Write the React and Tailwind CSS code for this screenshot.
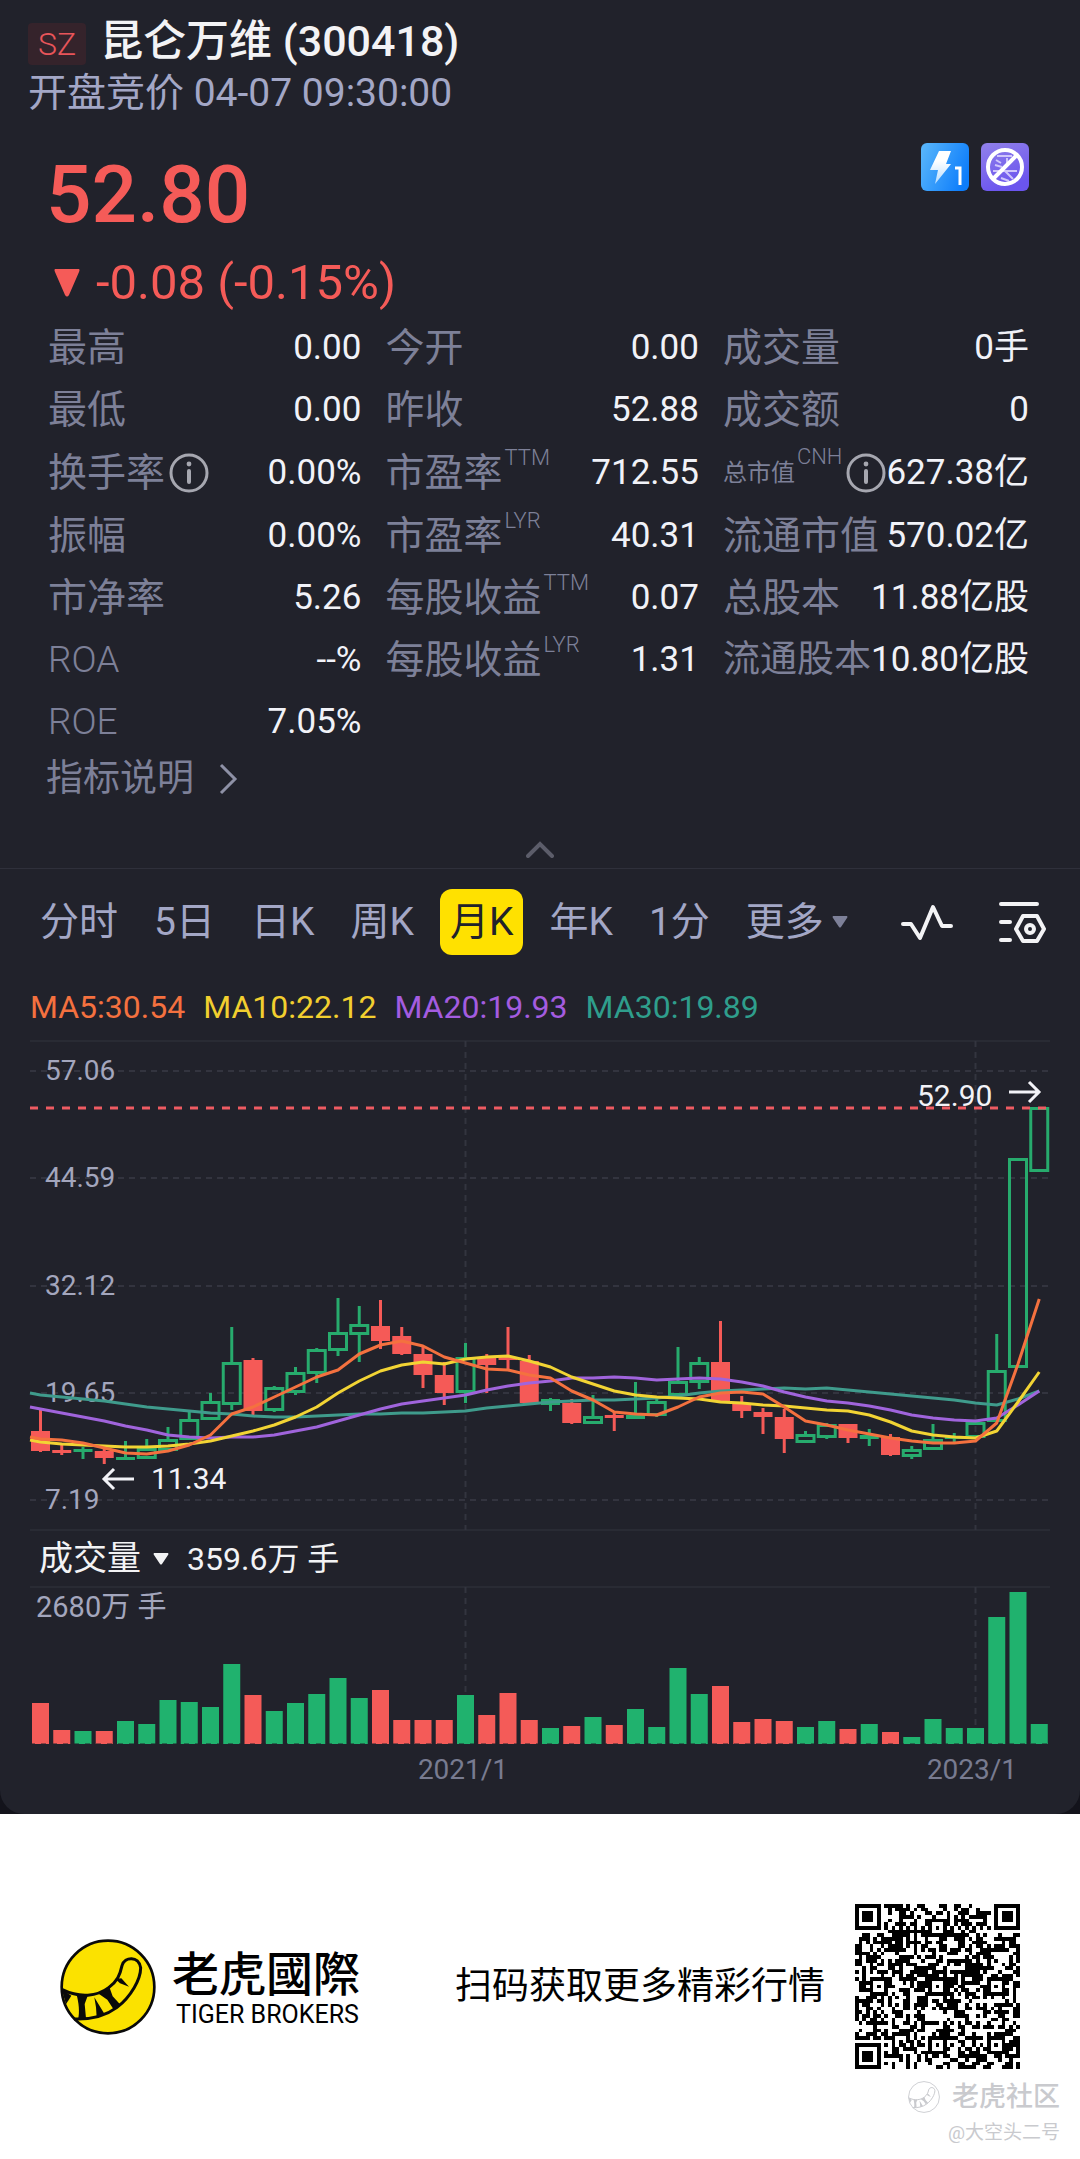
const STEP = 21.25;
const START = 40.5;

const cx = (i) => START + i * STEP;

const stats = [
  { label: "最高", value: "0.00" },
  { label: "今开", value: "0.00" },
  { label: "成交量", value: "0手" },
  { label: "最低", value: "0.00" },
  { label: "昨收", value: "52.88" },
  { label: "成交额", value: "0" },
  { label: "换手率", value: "0.00%", info: true },
  { label: "市盈率", sup: "TTM", value: "712.55" },
  { label: "总市值", sup: "CNH", value: "627.38亿", info: true, size: "text-[24px]" },
  { label: "振幅", value: "0.00%" },
  { label: "市盈率", sup: "LYR", value: "40.31" },
  { label: "流通市值", value: "570.02亿" },
  { label: "市净率", value: "5.26" },
  { label: "每股收益", sup: "TTM", value: "0.07" },
  { label: "总股本", value: "11.88亿股" },
  { label: "ROA", value: "--%", size: "text-[37px] font-light" },
  { label: "每股收益", sup: "LYR", value: "1.31" },
  { label: "流通股本", value: "10.80亿股", size: "text-[37px]" },
  { label: "ROE", value: "7.05%", size: "text-[37px] font-light" },
];

const tabs = ["分时", "5日", "日K", "周K", "月K", "年K", "1分"];

const averages = [
  {
    text: "MA5:30.54",
    className: "text-[#f4713f]",
    stroke: "#f4713f",
    points: [399, 400, 403, 408, 413, 414, 411, 405, 395, 374, 367, 357, 347, 337, 330, 314, 305, 301, 306, 317, 323, 329, 330, 335, 338, 351, 360, 372, 374, 375, 367, 357, 353, 352, 354, 367, 381, 385, 390, 394, 398, 401, 403, 403, 401, 383, 324, 259],
  },
  {
    text: "MA10:22.12",
    className: "text-[#f2cf2f]",
    stroke: "#f2d434",
    points: [402, 404, 405, 406, 407, 407, 406, 404, 401, 396, 391, 385, 377, 367, 353, 341, 331, 325, 322, 324, 319, 317, 316, 321, 327, 337, 344, 351, 355, 357, 358, 359, 362, 363, 365, 366, 368, 370, 371, 375, 382, 391, 395, 397, 398, 391, 362, 332],
  },
  {
    text: "MA20:19.93",
    className: "text-[#a45ce0]",
    stroke: "#a064dc",
    points: [369, 373, 377, 381, 386, 390, 395, 397, 398, 397, 397, 395, 391, 387, 381, 375, 369, 364, 361, 358, 355, 350, 346, 343, 341, 338, 338, 337, 338, 340, 339, 338, 339, 342, 346, 352, 357, 361, 363, 366, 370, 375, 378, 380, 381, 378, 365, 351],
  },
  {
    text: "MA30:19.89",
    className: "text-[#2f9e8c]",
    stroke: "#3f9b8c",
    points: [355, 357, 359, 361, 364, 367, 369, 371, 373, 374, 376, 377, 377, 376, 375, 374, 374, 373, 373, 372, 371, 368, 366, 364, 362, 361, 360, 360, 359, 358, 356, 353, 351, 350, 349, 348, 349, 348, 350, 352, 354, 356, 358, 360, 363, 365, 359, 351],
  },
];

// [up, high, body top, body bottom, low, volume]
const candles = [
  [0, 369, 391, 411, 412, 41],
  [0, 405, 410, 413, 415, 14],
  [1, 407, 409, 412, 419, 13],
  [0, 408, 411, 418, 424, 13],
  [1, 401, 417, 420, 420, 23],
  [1, 399, 408, 419, 419, 20],
  [1, 387, 399, 411, 411, 44],
  [1, 372, 379, 400, 400, 42],
  [1, 353, 361, 380, 380, 37],
  [1, 287, 322, 365, 370, 80],
  [0, 318, 320, 371, 375, 49],
  [1, 346, 347, 371, 372, 33],
  [1, 327, 332, 353, 355, 41],
  [1, 308, 309, 334, 343, 50],
  [1, 258, 292, 311, 316, 66],
  [1, 266, 284, 295, 322, 46],
  [0, 260, 286, 301, 309, 54],
  [0, 287, 296, 314, 315, 24],
  [0, 307, 314, 335, 348, 24],
  [0, 322, 335, 353, 365, 24],
  [1, 303, 317, 353, 363, 49],
  [0, 314, 318, 325, 353, 29],
  [0, 287, 317, 320, 330, 51],
  [0, 315, 321, 363, 363, 24],
  [1, 358, 359, 365, 371, 16],
  [0, 359, 363, 383, 384, 18],
  [1, 355, 376, 384, 384, 27],
  [0, 372, 375, 378, 391, 19],
  [1, 342, 375, 379, 379, 35],
  [1, 359, 361, 376, 377, 17],
  [1, 307, 341, 356, 357, 76],
  [1, 317, 322, 343, 349, 50],
  [0, 281, 322, 361, 363, 58],
  [0, 356, 363, 371, 378, 22],
  [0, 368, 372, 377, 394, 25],
  [0, 369, 377, 399, 413, 23],
  [1, 391, 394, 403, 403, 17],
  [1, 383, 384, 398, 399, 23],
  [0, 384, 384, 398, 403, 15],
  [1, 389, 395, 399, 406, 20],
  [0, 394, 397, 415, 416, 12],
  [1, 406, 409, 417, 419, 7],
  [1, 384, 399, 410, 410, 25],
  [1, 393, 397, 399, 403, 16],
  [1, 382, 382, 398, 399, 16],
  [1, 294, 330, 382, 382, 127],
  [1, 118, 118, 328, 328, 152],
  [1, 67, 67, 132, 132, 20],
];

const priceAxis = [
  ["57.06", 31],
  ["44.59", 138],
  ["32.12", 246],
  ["19.65", 353],
  ["7.19", 460],
];

const QR_SIZE = 45;

const inFinder = (x, y) => (x < 8 && y < 8) || (x > QR_SIZE - 9 && y < 8) || (x < 8 && y > QR_SIZE - 9);

const qrPath = (() => {
  let seed = 300418;
  let d = "";
  for (let y = 0; y < QR_SIZE; y++) {
    for (let x = 0; x < QR_SIZE; x++) {
      seed = (seed * 1103515245 + 12345) % 2147483648;
      let dark = seed / 2147483648 > 0.48;
      if (x === 6 || y === 6) dark = (x + y) % 2 === 0;
      if (dark && !inFinder(x, y)) d += `M${x} ${y}h1v1h-1z`;
    }
  }
  return d;
})();

const InfoIcon = () => (
  <svg viewBox="0 0 40 40" className="w-10 h-10 shrink-0" fill="none" stroke="#a6a7b0" aria-hidden="true">
    <circle cx="20" cy="20" r="18" strokeWidth="3" />
    <path d="M20 18v11" strokeWidth="4" strokeLinecap="round" />
    <circle cx="20" cy="11" r="2.4" fill="#a6a7b0" stroke="none" />
  </svg>
);

const LevelBadge = () => (
  <svg viewBox="0 0 48 48" className="w-12 h-12" aria-label="Level 1">
    <defs>
      <linearGradient id="blue" x1="0" y1="0.2" x2="1" y2="0.6">
        <stop offset="0" stopColor="#56b4fb" />
        <stop offset="1" stopColor="#0d7dfb" />
      </linearGradient>
      <linearGradient id="bolt" x1="0" y1="0" x2="0" y2="1">
        <stop offset="0.3" stopColor="#fff" />
        <stop offset="1" stopColor="#b5dcff" />
      </linearGradient>
    </defs>
    <rect width="48" height="48" rx="6" fill="url(#blue)" />
    <path d="M18 8h12l-5 13h5L14 41l3-14H9z" fill="url(#bolt)" />
    <path d="M34 25h5v17" fill="none" stroke="#fff" strokeWidth="3" />
  </svg>
);

const NoShortBadge = () => (
  <svg viewBox="0 0 48 48" className="w-12 h-12" aria-label="No short selling">
    <defs>
      <linearGradient id="violet" x1="0" y1="0" x2="0.4" y2="1">
        <stop offset="0" stopColor="#9181ea" />
        <stop offset="1" stopColor="#6b55ee" />
      </linearGradient>
    </defs>
    <rect width="48" height="48" rx="6" fill="url(#violet)" />
    <g fill="none" stroke="#cfc6fb" strokeWidth="2">
      <path d="M16 13h15M15 17l5 3M14 22l7 2M26 15v6M12 28h24M24 28l8 8M20 35l8 3" />
    </g>
    <g fill="none" stroke="#fff" strokeWidth="4">
      <circle cx="24" cy="24" r="17" />
      <path d="M12 36l24-24" />
    </g>
  </svg>
);

const TigerLogo = ({ className, fill, stroke }) => (
  <svg viewBox="0 0 288 288" className={className} aria-hidden="true">
    <circle cx="144" cy="144" r="139" fill={fill} stroke={stroke} strokeWidth="8" />
    <path
      d="M7 152C60 178 112 172 146 146C172 126 180 108 186 80C194 52 236 50 242 86C242 120 214 172 170 206C132 234 90 242 42 240"
      fill="none"
      stroke={stroke}
      strokeWidth="9"
    />
    <g fill={stroke}>
      <path d="M5 150L34 170L18 196Z" />
      <path d="M50 168H84L74 195L78 238L54 242C60 220 56 190 50 168Z" />
      <path d="M103 175L112 190L134 226L110 235L108 205Z" />
      <path d="M116 164L148 144L158 172L180 196L160 210L142 182Z" />
      <path d="M166 120L184 118L207 143L180 133Z" />
    </g>
  </svg>
);

const Candle = ({ index, data }) => {
  const [up, high, top, bottom, low] = data;
  const x = cx(index);
  const color = up ? "#27ab6d" : "#f55a57";
  const hollow = up && bottom - top > 6;

  return (
    <g stroke={color} strokeWidth="3" fill="none">
      {high < top && <path d={`M${x} ${high}V${top + 1}`} />}
      {low > bottom && <path d={`M${x} ${bottom - 1}V${low}`} />}
      {hollow ? (
        <rect x={x - 8.5} y={top + 1.5} width="17" height={bottom - top - 3} />
      ) : (
        <rect x={x - 9.5} y={top} width="19" height={bottom - top} fill={color} stroke="none" />
      )}
    </g>
  );
};

const PriceChart = () => (
  <svg viewBox="0 0 1080 491" className="block w-full h-auto" fontFamily="Roboto, sans-serif">
    <g stroke="#33343f" strokeWidth="2" fill="none">
      <path d="M30 1H1050M30 490H1050" strokeWidth="1" />
      <g strokeDasharray="6 5">
        {priceAxis.map(([label, y]) => (
          <path key={label} d={`M30 ${y}H1050`} />
        ))}
        <path d={`M${cx(20)} 1V490M${cx(44)} 1V490`} />
      </g>
    </g>
    <g fill="#a3a6bd" fontSize="28">
      {priceAxis.map(([label, y]) => (
        <text key={label} x="45" y={y + 9}>{label}</text>
      ))}
    </g>

    {candles.map((data, i) => (
      <Candle key={i} index={i} data={data} />
    ))}

    <path d="M30 68H1050" stroke="#ee5b62" strokeWidth="3" strokeDasharray="8 8" />

    <g fill="none" strokeWidth="3" strokeLinejoin="round">
      {averages.slice().reverse().map((line) => (
        <polyline
          key={line.text}
          stroke={line.stroke}
          points={`30,${line.points[0] - 2} ` + line.points.map((y, i) => `${cx(i)},${y}`).join(" ")}
        />
      ))}
    </g>

    {/* high and low marks */}
    <g fill="#f2f2f7" fontSize="30">
      <text x="917" y="66">52.90</text>
      <text x="151" y="449">11.34</text>
    </g>
    <g fill="none" stroke="#f2f2f7" strokeWidth="3">
      <path d="M1009 52H1039M1029 42L1039 52L1029 62" />
      <path d="M134 439H104M114 429L104 439L114 449" />
    </g>
  </svg>
);

const VolumeChart = () => (
  <svg viewBox="0 0 1080 228" className="block w-full h-auto" fontFamily="Roboto, 'Noto Sans CJK SC', sans-serif">
    <g stroke="#33343f" fill="none">
      <path d="M30 1H1050" />
      <path d={`M${cx(20)} 1V158M${cx(44)} 1V158`} strokeWidth="2" strokeDasharray="6 5" />
    </g>
    <text x="36" y="31" fill="#a3a6bd" fontSize="29">2680万 手</text>
    {candles.map(([up, , , , , volume], i) => (
      <rect key={i} x={cx(i) - 8.5} y={158 - volume} width="17" height={volume} fill={up ? "#20b26e" : "#f45b58"} />
    ))}
    <path d="M30 158H1050" stroke="#21222b" strokeDasharray="5 6" />
    <g fill="#787b90" fontSize="28" textAnchor="middle">
      <text x="463" y="193">2021/1</text>
      <text x="972" y="193">2023/1</text>
    </g>
  </svg>
);

const Stat = ({ label, sup, value, info, size = "text-[39px]" }) => (
  <div className={`flex items-center justify-between whitespace-nowrap ${info ? "h-16" : "h-[62px]"}`}>
    <dt className={`flex items-center h-full text-[#7d8098] ${size}`}>
      {label}
      {sup && <sup className="self-start top-0 ml-0.5 text-[22px] leading-8 font-light">{sup}</sup>}
      {info && <span className="ml-1"><InfoIcon /></span>}
    </dt>
    <dd className="text-[35px] text-[#f1f2f8]">{value}</dd>
  </div>
);

const App = () => {
  return (
    <div className="bg-white font-[Roboto,'Noto_Sans_CJK_SC',sans-serif]">
      <div className="bg-[#13131b]">
        <main className="bg-[#21222b] rounded-b-[24px] overflow-hidden">
          {/* Symbol */}
          <header className="px-7 pt-[17px]">
            <div className="flex items-center gap-3.5">
              <span className="px-2.5 mt-1.5 h-[42px] leading-[42px] rounded bg-[#35232b] text-[#e8555a] text-[32px] font-light">SZ</span>
              <h1 className="text-[43px] leading-[48px] font-medium text-[#f3f3f5]">昆仑万维 (300418)</h1>
            </div>
            <p className="mt-1 text-[39px] leading-[48px] text-[#a3a7c6]">开盘竞价 04-07 09:30:00</p>
          </header>

          {/* Price */}
          <section className="flex justify-between pl-[46px] pr-[51px] mt-[34px] text-[#f55b58]">
            <div>
              <p className="text-[80px] leading-[88px] font-medium">52.80</p>
              <p className="flex items-center gap-4 mt-3 pl-2 text-[49px] leading-[64px]">
                <svg viewBox="0 0 26 28" className="w-[26px] h-7" fill="currentColor" aria-hidden="true">
                  <path d="M1 0H25Q26 1 25 3L15 26Q13 29 11 26L1 3Q0 1 1 0Z" />
                </svg>
                -0.08 (-0.15%)
              </p>
            </div>
            <div className="flex gap-3 -mt-2">
              <LevelBadge />
              <NoShortBadge />
            </div>
          </section>

          {/* Key figures */}
          <dl className="grid grid-cols-[315fr_315fr_302fr] items-center gap-x-6 pl-12 pr-[51px] mt-0.5">
            {stats.map((item, index) => (
              <Stat key={index} {...item} />
            ))}
          </dl>
          <a href="#indicators" className="inline-flex items-center gap-6 ml-[46px] h-[52px] text-[37px] text-[#7d8098]">
            指标说明
            <svg viewBox="0 0 20 32" className="w-5 h-8" fill="none" stroke="#8e91a6" strokeWidth="3" aria-hidden="true">
              <path d="M3 2L17 16L3 30" />
            </svg>
          </a>

          <button aria-label="收起" className="flex items-end justify-center w-full h-16 pb-2.5 border-b border-[#2f303b]">
            <svg viewBox="0 0 28 18" className="w-7 h-[18px]" fill="none" stroke="#5c5d6a" strokeWidth="4" strokeLinecap="round">
              <path d="M2 16L14 4L26 16" />
            </svg>
          </button>

          {/* Periods */}
          <nav className="flex items-center justify-between pl-[30px] pr-[34px] pt-5 text-[39px] text-[#a3a7c6]">
            <div className="flex gap-4">
              {tabs.map((tab) => (
                <button
                  key={tab}
                  className={`h-[66px] px-2.5 rounded-xl whitespace-nowrap ${tab === "月K" ? "bg-[#ffe100] text-[#21222b]" : ""}`}
                >
                  {tab}
                </button>
              ))}
              <button aria-haspopup="menu" className="flex items-center gap-2 h-[66px] pl-2.5 whitespace-nowrap">
                更多
                <svg viewBox="0 0 16 12" className="w-4 h-3" fill="#7d8098" aria-hidden="true">
                  <path d="M1 0H15Q16 1 15 2L9 11Q8 12 7 11L1 2Q0 1 1 0Z" />
                </svg>
              </button>
            </div>
            <div className="flex items-center gap-11">
              <button aria-label="画线">
                <svg viewBox="0 0 54 42" className="w-[54px] h-[42px]" fill="none" stroke="#f3f3f5" strokeWidth="4" strokeLinecap="round" strokeLinejoin="round">
                  <path d="M3 23H11L20 37L33 6L42 25H51" />
                </svg>
              </button>
              <button aria-label="设置">
                <svg viewBox="0 0 48 44" className="w-12 h-11" fill="none" stroke="#f3f3f5" strokeWidth="4" strokeLinecap="round" strokeLinejoin="round">
                  <path d="M3 4H39M3 22H12M3 40H12" />
                  <path d="M25 16H39L46 29L39 41H25L18 29Z" />
                  <circle cx="32" cy="29" r="4" />
                </svg>
              </button>
            </div>
          </nav>

          <ul className="flex gap-[18px] pl-[30px] mt-8 text-[32px] leading-10">
            {averages.map((item) => (
              <li key={item.text} className={item.className}>{item.text}</li>
            ))}
          </ul>

          {/* Charts */}
          <div className="mt-[13px]">
            <PriceChart />
          </div>
          <div className="flex items-center gap-[18px] h-[55px] pl-[39px] text-[34px] text-[#f3f3f5]">
            <button aria-haspopup="menu" className="flex items-center gap-3">
              成交量
              <svg viewBox="0 0 16 12" className="w-4 h-3" fill="currentColor" aria-hidden="true">
                <path d="M1 0H15Q16 1 15 2L9 11Q8 12 7 11L1 2Q0 1 1 0Z" />
              </svg>
            </button>
            <span className="text-[32px]">359.6万 手</span>
          </div>
          <VolumeChart />
        </main>
      </div>

      <footer className="px-[60px] pt-[90px] pb-2 text-black">
        <div className="flex items-center justify-between">
          <div className="flex items-center gap-4">
            <TigerLogo className="w-24 h-24" fill="#fbe200" stroke="#0a0a0a" />
            <div>
              <p className="text-[47px] leading-[52px] font-medium font-['Noto_Sans_CJK_TC',sans-serif]">老虎國際</p>
              <p className="pl-1 mt-1 text-[25px] leading-7">TIGER BROKERS</p>
            </div>
          </div>
          <div className="flex items-center gap-[30px]">
            <p className="text-[37px] whitespace-nowrap">扫码获取更多精彩行情</p>
            <svg viewBox="0 0 45 45" className="w-[165px] h-[165px]" shapeRendering="crispEdges" role="img" aria-label="二维码">
              <path d={qrPath} />
              {[[0, 0], [38, 0], [0, 38]].map(([x, y]) => (
                <g key={`${x}-${y}`}>
                  <rect x={x + 0.5} y={y + 0.5} width="6" height="6" fill="none" stroke="#000" />
                  <rect x={x + 2} y={y + 2} width="3" height="3" />
                </g>
              ))}
              {[[20, 20], [36, 20], [20, 36], [36, 36], [20, 4], [4, 20]].map(([x, y]) => (
                <g key={`${x}-${y}`}>
                  <rect x={x + 0.5} y={y + 0.5} width="4" height="4" fill="#fff" stroke="#000" />
                  <rect x={x + 2} y={y + 2} width="1" height="1" />
                </g>
              ))}
            </svg>
          </div>
        </div>
        <div className="flex flex-col items-end mt-2 -mr-10 text-[#c9cace]">
          <p className="flex items-center gap-3 text-[27px] leading-10 font-medium">
            <TigerLogo className="w-8 h-8" fill="none" stroke="#c9cace" />
            老虎社区
          </p>
          <p className="text-[19px] leading-8">@大空头二号</p>
        </div>
      </footer>
    </div>
  );
};

export default App;
